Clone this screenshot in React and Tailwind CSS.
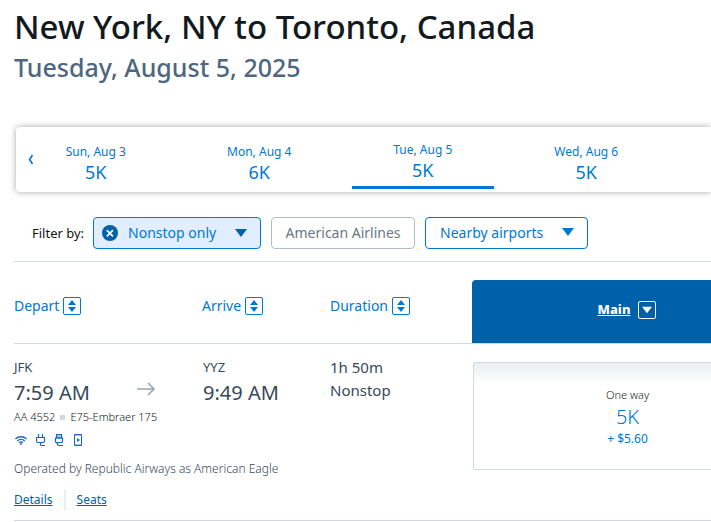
import React, { useState } from 'react';

const dates = [
  { id: 'sun', label: 'Sun, Aug 3', price: '5K' },
  { id: 'mon', label: 'Mon, Aug 4', price: '6K' },
  { id: 'tue', label: 'Tue, Aug 5', price: '5K' },
  { id: 'wed', label: 'Wed, Aug 6', price: '5K' },
];

const TriangleDown = ({ className }) => (
  <svg className={className} viewBox="0 0 12 8" fill="currentColor" aria-hidden="true">
    <path d="M0 0h12L6 8z" />
  </svg>
);

const CloseCircle = () => (
  <svg className="h-4 w-4" viewBox="0 0 16 16" aria-hidden="true">
    <circle cx="8" cy="8" r="8" fill="#0061ab" />
    <path d="M4.8 5.2l6.2 6.2M11 5.2l-6.2 6.2" stroke="#fff" strokeWidth="1.7" />
  </svg>
);

const WifiIcon = () => (
  <svg className="h-4 w-3" viewBox="0 0 12 16" fill="none" stroke="currentColor" strokeWidth="1.3" aria-hidden="true">
    <path d="M.4 7C3.4 4 8.6 4 11.6 7M2.2 9C4.4 6.9 7.6 6.9 9.8 9M4 10.8C5.3 9.6 6.7 9.6 8 10.8" />
    <circle cx="6" cy="12" r=".9" fill="currentColor" stroke="none" />
  </svg>
);

const PlugIcon = () => (
  <svg className="h-4 w-3" viewBox="0 0 12 16" fill="none" stroke="currentColor" strokeWidth="1.2" aria-hidden="true">
    <path d="M4.5 2v3.500M8.500 2v3.500M2 5.500h9M2.500 5.500V9c0 1 .5 1.500 1.500 1.500h5c1 0 1.500-.5 1.500-1.500V5.500M6.500 10.500v1.700c0 .9.5 1.300 1.300 1.300H11" />
  </svg>
);

const UsbIcon = () => (
  <svg className="h-4 w-3" viewBox="0 0 12 16" fill="none" stroke="currentColor" strokeWidth="1.2" aria-hidden="true">
    <path d="M3.500 2.500h5V6h-5z" fill="#a9c8ec" />
    <path d="M2.500 6h7v3.500c0 .6-.4 1-1 1h-5c-.6 0-1-.4-1-1zM4 10.500c0 2 .7 3 2.500 3H10" />
  </svg>
);

const TabletIcon = () => (
  <svg className="h-4 w-3" viewBox="0 0 12 16" fill="none" stroke="currentColor" aria-hidden="true">
    <path d="M2.500 2.500h7v11h-7z" />
    <path d="M3 3.500h6M3 12.500h6" strokeOpacity=".4" />
    <path d="M5 6v4l3-2z" fill="currentColor" stroke="none" />
  </svg>
);

const amenities = [
  { name: 'Wi-Fi', icon: WifiIcon },
  { name: 'Power outlet', icon: PlugIcon },
  { name: 'USB power', icon: UsbIcon },
  { name: 'Personal device entertainment', icon: TabletIcon },
];

const SortButton = ({ children }) => (
  <button type="button" className="flex items-center gap-1 pb-3 text-sm leading-5 text-[#0078d2]">
    {children}
    <span className="flex h-[18px] w-[18px] items-center justify-center rounded-xs border border-[#0078d2]">
      <svg className="h-3 w-2" viewBox="0 0 8 12" fill="currentColor" aria-hidden="true">
        <path d="M4 0l4 5H0zM0 7h8l-4 5z" />
      </svg>
    </span>
  </button>
);

const DateTab = ({ label, price, active, onSelect }) => (
  <button
    type="button"
    role="tab"
    aria-selected={active}
    onClick={onSelect}
    className={`mx-[11px] flex h-[62px] flex-col items-center text-[#0078d2] ${
      active ? 'border-b-3 border-[#0078d2] pt-[13px]' : 'pt-[15px]'
    }`}
  >
    <span className="text-xs leading-5">{label}</span>
    <span className="text-lg leading-5">{price}</span>
  </button>
);

const App = () => {
  const [selected, setSelected] = useState('tue');

  return (
    <main className="overflow-hidden bg-white pl-[14px] font-['Noto_Sans',sans-serif] text-[#36495a]">
      {/* Route heading */}
      <h1 className="pt-1 text-[33px] leading-[46px] font-medium text-[#131920]">
        New York, NY to Toronto, Canada
      </h1>
      <p className="text-[25px] leading-[34px] font-medium text-[#4f6680]">Tuesday, August 5, 2025</p>

      {/* Date carousel */}
      <div className="relative mt-[43px] ml-0.5 rounded-l-sm bg-white shadow-[0_0_6px_rgba(0,0,0,0.35)]">
        <button
          type="button"
          aria-label="Previous dates"
          className="absolute top-[27px] left-[11px] text-[#0078d2]"
        >
          <svg className="h-[11px] w-2" viewBox="0 0 8 11" fill="none" stroke="currentColor" strokeWidth="1.6" aria-hidden="true">
            <path d="M5.500 1C4.500 2.500 3.800 4 2.500 5.500c1.300 1.500 2 3 3 4.500" />
          </svg>
        </button>
        <div role="tablist" className="mr-[43px] -ml-0.5 grid h-[65px] grid-cols-4">
          {dates.map(({ id, label, price }) => (
            <DateTab
              key={id}
              label={label}
              price={price}
              active={id === selected}
              onSelect={() => setSelected(id)}
            />
          ))}
        </div>
      </div>

      {/* Filters */}
      <div className="mt-[25px] flex items-center border-b border-[#d0dae0] pb-3 pl-[18px] text-sm">
        <span className="mr-[9px] text-[13px] text-[#131313]">Filter by:</span>
        <div className="relative mr-[10px] flex h-8 w-[168px] items-center rounded-sm border border-[#0078d2] bg-[#e0eeff] pl-2 text-[#0061ab]">
          <button type="button" aria-label="Clear stops filter">
            <CloseCircle />
          </button>
          <select aria-label="Stops" className="h-full flex-1 appearance-none pl-[10px] text-[#0078d2]">
            <option>Nonstop only</option>
          </select>
          <TriangleDown className="pointer-events-none absolute top-[11px] right-[13px] h-2 w-3" />
        </div>
        <button type="button" className="mr-[10px] h-8 w-36 rounded-sm border border-[#b0bcc9] text-[#6a7680]">
          American Airlines
        </button>
        <div className="relative h-8 w-[163px] rounded-sm border border-[#0078d2] text-[#0078d2]">
          <select aria-label="Airports" className="h-full w-full appearance-none pl-[14px]">
            <option>Nearby airports</option>
          </select>
          <TriangleDown className="pointer-events-none absolute top-[10px] right-[13px] h-2 w-3" />
        </div>
      </div>

      {/* Column headings */}
      <div className="grid grid-cols-[188px_128px_142px_minmax(310px,1fr)] items-center border-b border-[#d0dae0] pt-[18px]">
        <SortButton>Depart</SortButton>
        <SortButton>Arrive</SortButton>
        <SortButton>Duration</SortButton>
        <div className="flex h-[63px] items-center justify-center gap-2 rounded-tl-sm bg-[#0061ab] pb-1 text-[13px] font-extrabold text-white">
          <a href="#main" className="underline">Main</a>
          <button
            type="button"
            aria-label="Sort by Main fare"
            className="flex h-[18px] w-[18px] items-center justify-center rounded-xs border border-white"
          >
            <TriangleDown className="h-2 w-[10px]" />
          </button>
        </div>
      </div>

      {/* Flight */}
      <article className="grid grid-cols-[458px_minmax(310px,1fr)] border-b border-[#d0dae0]">
        <div className="pt-3 pb-[10px]">
          <div className="grid grid-cols-[122px_67px_127px_142px]">
            <div>
              <p className="text-[13px] leading-[22px]">JFK</p>
              <p className="text-xl leading-[30px]">7:59 AM</p>
            </div>
            <svg className="mt-[25px] h-4 w-5" viewBox="0 0 20 16" fill="none" stroke="#9da6ab" strokeWidth="1.6" aria-hidden="true">
              <path d="M1 8h17M12 2l6 6-6 6" />
            </svg>
            <div>
              <p className="text-[13px] leading-[22px]">YYZ</p>
              <p className="text-xl leading-[30px]">9:49 AM</p>
            </div>
            <div className="text-[15px] leading-[23px]">
              <p>1h 50m</p>
              <p>Nonstop</p>
            </div>
          </div>
          <p className="flex items-center gap-[5px] text-[11px] leading-[18px] font-light text-[#131920]">
            AA 4552
            <span className="h-[5px] w-[5px] bg-[#d0dae0]" />
            E75-Embraer 175
          </p>
          <ul className="mt-[6px] flex gap-[7px] pl-px text-[#1a66c4]">
            {amenities.map(({ name, icon: Icon }) => (
              <li key={name} title={name}>
                <Icon />
              </li>
            ))}
          </ul>
          <p className="mt-[11px] text-xs leading-5 font-light text-[#36495a]">
            Operated by Republic Airways as American Eagle
          </p>
          <div className="mt-[11px] flex items-center text-xs leading-5 text-[#0061ab]">
            <a href="#details" className="border-r-2 border-[#ebeff0] pr-[11px] underline">Details</a>
            <a href="#seats" className="pl-[11px] underline">Seats</a>
          </div>
        </div>
        <button
          type="button"
          className="mt-[18px] ml-[1px] flex h-[108px] flex-col items-center rounded-xs border border-[#d0dae0] bg-linear-to-b from-[#ebeff0] to-white to-20% pt-[22px]"
        >
          <span className="text-[11px] leading-5 font-light text-[#131920]">One way</span>
          <span className="text-xl leading-6 font-light text-[#0078d2]">5K</span>
          <span className="text-xs leading-5 text-[#0078d2]">+ $5.60</span>
        </button>
      </article>
    </main>
  );
};

export default App;
